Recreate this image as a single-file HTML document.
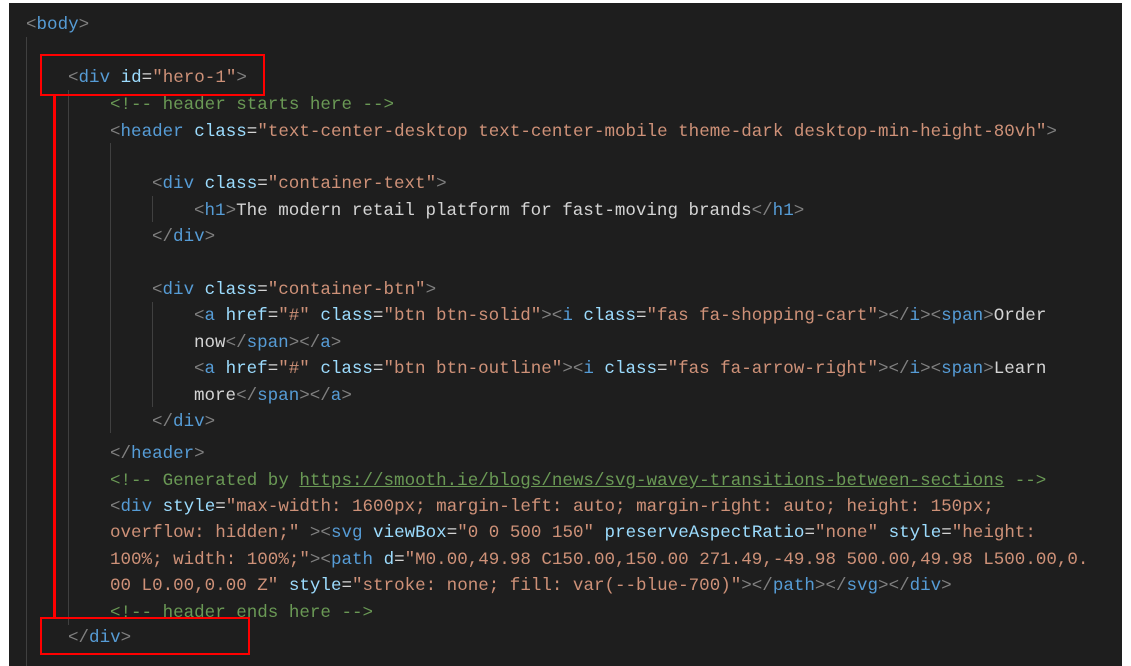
<!DOCTYPE html>
<html><head><meta charset="utf-8"><style>
html,body{margin:0;padding:0;background:#fff;width:1131px;height:666px;overflow:hidden}
#ed{position:absolute;left:9px;top:3px;width:1113px;height:663px;background:#1e1e1e}
#code{position:absolute;left:0;top:2px;width:1131px;height:664px}
.l{position:absolute;left:0;height:26px;line-height:26px;white-space:pre;font-family:"Liberation Mono",monospace;font-size:17.55px;color:#d4d4d4}
.p{color:#808080}.t{color:#569cd6}.a{color:#9cdcfe}.s{color:#ce9178}.c{color:#6a9955}.u{text-decoration:underline}
.g{position:absolute;width:1px;background:#404040}
.r{position:absolute;border:2px solid #f00}
</style></head><body>
<div id="ed"></div>
<div class="g" style="left:26px;top:37px;height:629px"></div>
<div class="g" style="left:68px;top:90px;height:535px"></div>
<div class="g" style="left:110px;top:143px;height:290px"></div>
<div class="g" style="left:152px;top:196px;height:26px"></div>
<div class="g" style="left:152px;top:302px;height:105px"></div>
<div id="code">
<div class="l" style="top:10px;left:26px"><span class="p">&lt;</span><span class="t">body</span><span class="p">&gt;</span></div>
<div class="l" style="top:63px;left:68px"><span class="p">&lt;</span><span class="t">div</span> <span class="a">id</span>=<span class="s">"hero-1"</span><span class="p">&gt;</span></div>
<div class="l" style="top:90px;left:110px"><span class="c">&lt;!-- header starts here --&gt;</span></div>
<div class="l" style="top:117px;left:110px"><span class="p">&lt;</span><span class="t">header</span> <span class="a">class</span>=<span class="s">"text-center-desktop text-center-mobile theme-dark desktop-min-height-80vh"</span><span class="p">&gt;</span></div>
<div class="l" style="top:169px;left:152px"><span class="p">&lt;</span><span class="t">div</span> <span class="a">class</span>=<span class="s">"container-text"</span><span class="p">&gt;</span></div>
<div class="l" style="top:196px;left:194px"><span class="p">&lt;</span><span class="t">h1</span><span class="p">&gt;</span>The modern retail platform for fast-moving brands<span class="p">&lt;/</span><span class="t">h1</span><span class="p">&gt;</span></div>
<div class="l" style="top:222px;left:152px"><span class="p">&lt;/</span><span class="t">div</span><span class="p">&gt;</span></div>
<div class="l" style="top:275px;left:152px"><span class="p">&lt;</span><span class="t">div</span> <span class="a">class</span>=<span class="s">"container-btn"</span><span class="p">&gt;</span></div>
<div class="l" style="top:301px;left:194px"><span class="p">&lt;</span><span class="t">a</span> <span class="a">href</span>=<span class="s">"#"</span> <span class="a">class</span>=<span class="s">"btn btn-solid"</span><span class="p">&gt;&lt;</span><span class="t">i</span> <span class="a">class</span>=<span class="s">"fas fa-shopping-cart"</span><span class="p">&gt;&lt;/</span><span class="t">i</span><span class="p">&gt;&lt;</span><span class="t">span</span><span class="p">&gt;</span>Order</div>
<div class="l" style="top:328px;left:194px">now<span class="p">&lt;/</span><span class="t">span</span><span class="p">&gt;&lt;/</span><span class="t">a</span><span class="p">&gt;</span></div>
<div class="l" style="top:354px;left:194px"><span class="p">&lt;</span><span class="t">a</span> <span class="a">href</span>=<span class="s">"#"</span> <span class="a">class</span>=<span class="s">"btn btn-outline"</span><span class="p">&gt;&lt;</span><span class="t">i</span> <span class="a">class</span>=<span class="s">"fas fa-arrow-right"</span><span class="p">&gt;&lt;/</span><span class="t">i</span><span class="p">&gt;&lt;</span><span class="t">span</span><span class="p">&gt;</span>Learn</div>
<div class="l" style="top:381px;left:194px">more<span class="p">&lt;/</span><span class="t">span</span><span class="p">&gt;&lt;/</span><span class="t">a</span><span class="p">&gt;</span></div>
<div class="l" style="top:407px;left:152px"><span class="p">&lt;/</span><span class="t">div</span><span class="p">&gt;</span></div>
<div class="l" style="top:439px;left:110px"><span class="p">&lt;/</span><span class="t">header</span><span class="p">&gt;</span></div>
<div class="l" style="top:466px;left:110px"><span class="c">&lt;!-- Generated by <span class="u">https://smooth.ie/blogs/news/svg-wavey-transitions-between-sections</span> --&gt;</span></div>
<div class="l" style="top:492px;left:110px"><span class="p">&lt;</span><span class="t">div</span> <span class="a">style</span>=<span class="s">"max-width: 1600px; margin-left: auto; margin-right: auto; height: 150px;</span></div>
<div class="l" style="top:518px;left:110px"><span class="s">overflow: hidden;"</span> <span class="p">&gt;&lt;</span><span class="t">svg</span> <span class="a">viewBox</span>=<span class="s">"0 0 500 150"</span> <span class="a">preserveAspectRatio</span>=<span class="s">"none"</span> <span class="a">style</span>=<span class="s">"height:</span></div>
<div class="l" style="top:545px;left:110px"><span class="s">100%; width: 100%;"</span><span class="p">&gt;&lt;</span><span class="t">path</span> <span class="a">d</span>=<span class="s">"M0.00,49.98 C150.00,150.00 271.49,-49.98 500.00,49.98 L500.00,0.</span></div>
<div class="l" style="top:571px;left:110px"><span class="s">00 L0.00,0.00 Z"</span> <span class="a">style</span>=<span class="s">"stroke: none; fill: var(--blue-700)"</span><span class="p">&gt;&lt;/</span><span class="t">path</span><span class="p">&gt;&lt;/</span><span class="t">svg</span><span class="p">&gt;&lt;/</span><span class="t">div</span><span class="p">&gt;</span></div>
<div class="l" style="top:598px;left:110px"><span class="c">&lt;!-- header ends here --&gt;</span></div>
<div class="l" style="top:623px;left:68px"><span class="p">&lt;/</span><span class="t">div</span><span class="p">&gt;</span></div>
</div>
<div class="r" style="left:40px;top:54px;width:221px;height:38px"></div>
<div class="r" style="left:40px;top:617px;width:206px;height:34px"></div>
<div style="position:absolute;left:53px;top:96px;width:3px;height:521px;background:#f00"></div>
</body></html>
